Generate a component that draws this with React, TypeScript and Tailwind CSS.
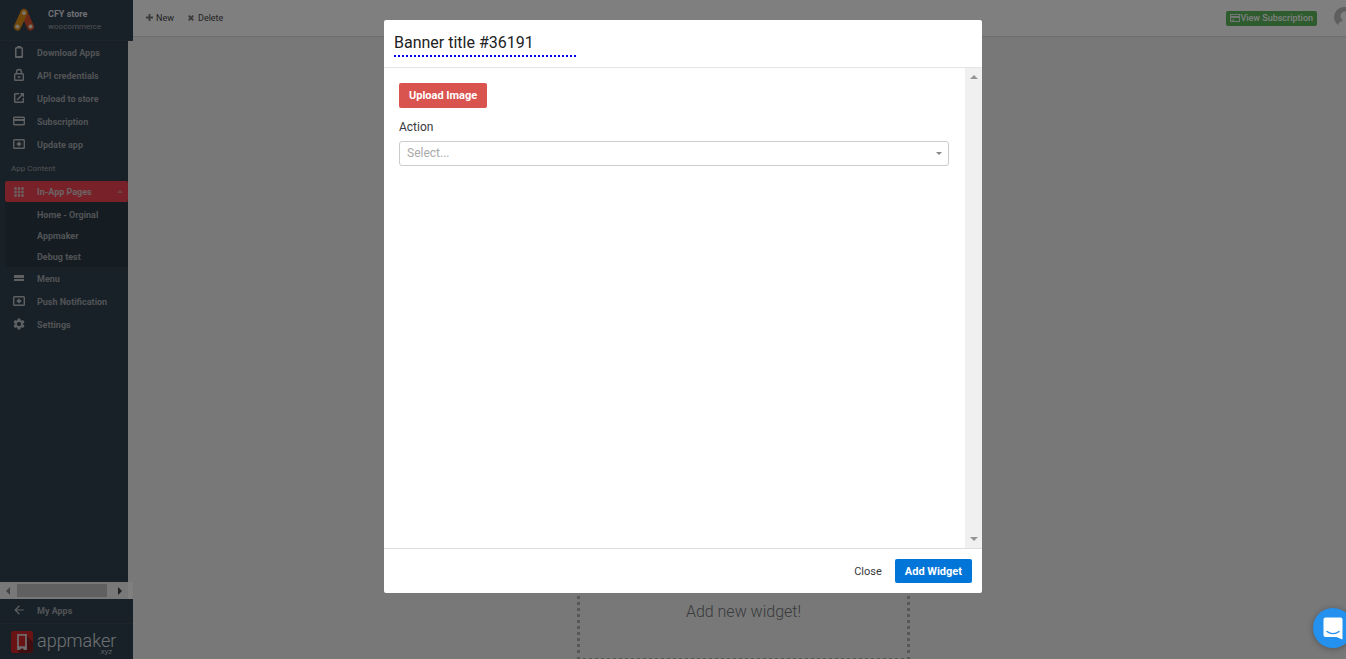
import React from "react";
import { MdApps, MdArrowBack, MdSettings } from "react-icons/md";

type IconProps = { children: React.ReactNode };

function Icon({ children }: IconProps) {
  return (
    <svg viewBox="0 0 14 14" className="mb-px size-[14px] shrink-0" fill="none" stroke="currentColor" aria-hidden="true">
      {children}
    </svg>
  );
}

const PhoneIcon = () => (
  <Icon>
    <rect x="3.75" y="2.75" width="6.5" height="9.5" rx="0.8" strokeWidth="1.6" />
    <path d="M5 1h4v2H5zM3 11h8v1.5H3z" fill="currentColor" stroke="none" />
  </Icon>
);
const LockIcon = () => (
  <Icon>
    <rect x="2.7" y="5.7" width="8.6" height="6.6" rx="0.8" strokeWidth="1.4" />
    <path d="M4.5 5.5V4a2.5 2.5 0 0 1 5 0v1.5" strokeWidth="1.4" />
    <path d="M5.5 9h3M7 8v2" strokeWidth="1.2" />
  </Icon>
);
const LaunchIcon = () => (
  <Icon>
    <path d="M7 2.700H3.200a.5.5 0 0 0-.5.5v7.600c0 .3.2.5.5.5h7.600c.3 0 .5-.2.5-.5V7" strokeWidth="1.500" />
    <path d="M5 9l5.500-5.500" strokeWidth="1.500" />
    <path d="M7.500 2H12v4.500z" fill="currentColor" stroke="none" />
  </Icon>
);
const CardIcon = () => (
  <Icon>
    <rect x="1.700" y="3.200" width="10.600" height="7.600" rx="0.800" strokeWidth="1.400" />
    <path d="M1.500 6h11" strokeWidth="2" />
  </Icon>
);
const BoxIcon = () => (
  <Icon>
    <rect x="1.700" y="2.700" width="10.600" height="8.600" rx="0.800" strokeWidth="1.400" />
    <path d="M7 4.500L9.700 7 7 9.500 4.300 7z" fill="currentColor" stroke="none" />
  </Icon>
);
const ListIcon = () => (
  <Icon>
    <path d="M2 4h2v3H2zM4 4h8v3H4zM2 8h2v2H2zM4 8h8v2H4z" fill="currentColor" stroke="none" />
  </Icon>
);

type NavItem = { label: string; icon: React.ReactNode };

const storeItems: NavItem[] = [
  { label: "Download Apps", icon: <PhoneIcon /> },
  { label: "API credentials", icon: <LockIcon /> },
  { label: "Upload to store", icon: <LaunchIcon /> },
  { label: "Subscription", icon: <CardIcon /> },
  { label: "Update app", icon: <BoxIcon /> },
];
const pages = ["Home - Orginal", "Appmaker", "Debug test"];
const contentItems: NavItem[] = [
  { label: "Menu", icon: <ListIcon /> },
  { label: "Push Notification", icon: <BoxIcon /> },
  { label: "Settings", icon: <MdSettings className="mb-px size-[14px]" /> },
];

function NavLink({ label, icon }: NavItem) {
  return (
    <a href="#" className="flex h-[23px] items-center gap-[11px] pl-3 text-[#bcc0c4]">
      {icon}
      <span className="pt-0.5 whitespace-nowrap text-[#a2a7ab]">{label}</span>
    </a>
  );
}

function StoreLogo() {
  return (
    <svg viewBox="0 0 22 24" className="h-6 w-[22px] shrink-0" strokeLinecap="round" aria-hidden="true">
      <path d="M11 4.500l6.600 14.500" stroke="#d6502c" strokeWidth="7" />
      <path d="M11 4.500L4.400 19" stroke="#e29118" strokeWidth="7" />
      <circle cx="11" cy="5" r="2" fill="#f4e8d2" />
      <circle cx="4.400" cy="18.500" r="2" fill="#f4e8d2" />
      <circle cx="17.600" cy="18.500" r="2" fill="#f4e8d2" />
    </svg>
  );
}

function Sidebar() {
  return (
    <aside className="flex w-[133px] shrink-0 flex-col text-[9px] font-bold">
      <div className="flex h-[41px] shrink-0 items-center gap-[13px] border-b border-[#3c4852] bg-[#314150] pl-[13px]">
        <StoreLogo />
        <div className="leading-3">
          <div className="text-[#dcdfe2]">CFY store</div>
          <div className="mt-px text-[8px] font-normal text-[#a0a5aa]">woocommerce</div>
        </div>
      </div>
      <nav className="mr-[5px] min-h-0 flex-1 overflow-hidden bg-[#314150]">
        {storeItems.map((item) => (
          <NavLink key={item.label} {...item} />
        ))}
        <h2 className="flex h-[25px] items-center pl-[11px] text-[8px] font-normal text-[#a0a5aa]">App Content</h2>
        <div className="ml-[5px] bg-[#2b3844]">
          <a href="#" className="flex h-[21px] items-center gap-[11px] rounded-xs bg-[#f14350] pl-[7px] pr-[5px] text-[#d9c6c9]">
            <MdApps className="size-[14px]" />
            <span className="flex-1 pt-0.5 whitespace-nowrap">In-App Pages</span>
            <svg viewBox="0 0 6 3" className="h-[3px] w-[6px]" aria-hidden="true">
              <path d="M0 3l3-3 3 3z" fill="#d88a90" />
            </svg>
          </a>
          <div className="pt-0.5">
            {pages.map((page) => (
              <a key={page} href="#" className="flex h-[21px] items-center pt-0.5 pl-8 text-[#a2a7ab]">
                {page}
              </a>
            ))}
          </div>
        </div>
        {contentItems.map((item) => (
          <NavLink key={item.label} {...item} />
        ))}
      </nav>
      <div className="flex h-[17px] shrink-0 bg-white" aria-hidden="true">
        <div className="flex flex-1 items-center bg-[#f1f1f1] px-[6px]">
          <svg viewBox="0 0 4 8" className="h-2 w-1">
            <path d="M4 0v8L0 4z" fill="#898989" />
          </svg>
          <div className="ml-[7px] h-[13px] w-[90px] bg-[#c1c1c1]" />
          <svg viewBox="0 0 4 8" className="ml-auto h-2 w-1">
            <path d="M0 0v8l4-4z" fill="#404040" />
          </svg>
        </div>
        <div className="w-[5px]" />
      </div>
      <a href="#" className="flex h-6 shrink-0 items-center gap-[11px] bg-[#314150] pl-3 text-[#bcc0c4]">
        <MdArrowBack className="mb-0.5 size-[14px]" />
        <span className="pt-px text-[#a2a7ab]">My Apps</span>
      </a>
      <div className="flex h-9 shrink-0 items-center gap-1 border-t border-[#3c4852] bg-[#314150] pl-[11px]">
        <svg viewBox="0 0 22 22" className="size-[22px] shrink-0" aria-hidden="true">
          <rect width="22" height="22" rx="2.500" fill="#d2262a" />
          <path d="M15 4l7 7v8.500a2.500 2.500 0 0 1-2.500 2.500H9L6 19z" fill="#811a20" />
          <path d="M7 3.800h8v12.500H7z" fill="#d2262a" stroke="#dfd4d6" strokeWidth="1.800" />
          <path d="M6.100 15.400h9.800V19h-3.400v-1.600h-3V19H6.100z" fill="#dfd4d6" />
        </svg>
        <div className="flex flex-col items-end pt-1 font-light text-[#dfe2e5]">
          <span className="text-[18px] leading-4">appmaker</span>
          <span className="pr-1 text-[8px] leading-[6px]">.xyz</span>
        </div>
      </div>
    </aside>
  );
}

function TopBar() {
  return (
    <header className="flex h-[37px] shrink-0 items-center border-b border-[#dcdcdc] bg-white pl-[13px] text-[9px] text-[#444]">
      <button type="button" className="flex items-center gap-[3px]">
        <svg viewBox="0 0 7 7" className="mb-px size-[7px]" aria-hidden="true">
          <path d="M3.500 0v7M0 3.500h7" stroke="#777" strokeWidth="1.800" />
        </svg>
        <span className="pt-0.5">New</span>
      </button>
      <button type="button" className="ml-[14px] flex items-center gap-1">
        <svg viewBox="0 0 7 7" className="size-[6px]" aria-hidden="true">
          <path d="M0.800 0.800l5.400 5.400M6.200 0.800L0.800 6.200" stroke="#777" strokeWidth="2.200" />
        </svg>
        <span className="pt-0.5">Delete</span>
      </button>
      <button type="button" className="ml-auto flex h-[15px] items-center rounded-xs bg-[#5cb85c] px-1 font-medium whitespace-nowrap text-white">
        <svg viewBox="0 0 10 8" className="h-2 w-[10px]" fill="none" stroke="#e6efe6" aria-hidden="true">
          <rect x="0.500" y="0.500" width="9" height="7" />
          <path d="M0 3h10" strokeWidth="2" />
          <path d="M1.500 6h3" />
        </svg>
        <span className="pt-0.5">View Subscription</span>
      </button>
      <div className="ml-[17px] w-3 overflow-hidden pb-0.5">
        <svg viewBox="0 0 20 20" className="block size-5 max-w-none" aria-label="Account" role="img">
          <circle cx="10" cy="10" r="10" fill="#bdbdbd" />
          <path d="M11 4.500a4.500 4.500 0 0 1 4.500 4.500c0 2-1 3-1.500 4.500L19 17a10 10 0 0 1-14 2c-1.500-2 0-4 3-5 1-.5.500-1-.200-2C6.500 11 6.500 10 6.500 9A4.500 4.500 0 0 1 11 4.500z" fill="#fff" />
        </svg>
      </div>
    </header>
  );
}

function BannerDialog() {
  return (
    <section role="dialog" aria-label="Banner" className="flex w-full max-w-[598px] flex-col rounded-xs bg-white">
      <header className="flex h-12 items-start border-b border-[#e5e5e5] px-[10px] pt-[11px]">
        <input
          aria-label="Banner title"
          defaultValue="Banner title #36191"
          className="h-[26px] w-[182px] border-b-2 border-dotted border-[#0000ee] pb-0.5 text-[16px] text-[#222] outline-none"
        />
      </header>
      <div className="flex h-[480px]">
        <div className="flex flex-1 flex-col items-start py-[15px] pl-[15px] pr-4">
          <button type="button" className="h-[25px] rounded-xs bg-[#d9534f] px-[10px] pt-px text-[11px] font-bold text-white">
            Upload Image
          </button>
          <label htmlFor="action" className="mt-[10px] text-[12px] leading-[18px] text-[#373a3c]">
            Action
          </label>
          <div className="relative mt-[5px] w-full">
            <select
              id="action"
              className="block h-[25px] w-full appearance-none rounded-[3px] border border-[#ccc] bg-white px-[7px] pb-0.5 text-[12px] text-[#aaa]"
            >
              <option>Select...</option>
            </select>
            <svg viewBox="0 0 6 3" className="pointer-events-none absolute right-[7px] top-[11px] h-[3px] w-[6px]" aria-hidden="true">
              <path d="M0 0h6L3 3z" fill="#888" />
            </svg>
          </div>
        </div>
        <div className="flex w-[17px] flex-col items-center justify-between bg-[#f0f0f0] py-[7px]" aria-hidden="true">
          <svg viewBox="0 0 8 4" className="h-1 w-2">
            <path d="M0 4l4-4 4 4z" fill="#969696" />
          </svg>
          <svg viewBox="0 0 8 4" className="h-1 w-2">
            <path d="M0 0h8L4 4z" fill="#969696" />
          </svg>
        </div>
      </div>
      <footer className="flex h-[45px] items-center justify-end gap-[13px] border-t border-[#ddd] px-[10px] text-[11px]">
        <button type="button" className="h-6 pt-0.5 text-[#373a3c]">
          Close
        </button>
        <button type="button" className="h-6 rounded-xs bg-[#0275d8] px-[10px] pt-0.5 font-bold text-white">
          Add Widget
        </button>
      </footer>
    </section>
  );
}

export default function App() {
  return (
    <div className="relative flex h-screen overflow-hidden bg-[#f0f0f0] font-[Roboto,sans-serif]">
      <Sidebar />
      <div className="flex min-w-0 flex-1 flex-col">
        <TopBar />
        <main className="flex min-h-0 flex-1 items-start justify-center overflow-hidden pl-2 pt-3">
          <div className="flex h-[612px] w-[333px] shrink-0 items-end justify-center border-[3px] border-dotted border-[#b0b0b0] pb-[34px]">
            <button type="button" className="text-[16px] leading-6 font-light text-[#72777b]">
              Add new widget!
            </button>
          </div>
        </main>
      </div>
      <div className="absolute inset-0 flex items-start justify-center bg-black/50 pl-5 pt-5">
        <BannerDialog />
      </div>
      <button
        type="button"
        aria-label="Open chat"
        className="absolute -right-[7px] bottom-[11px] flex size-10 items-center justify-center rounded-full bg-[#2391ed] shadow-[0_1px_6px_rgba(0,0,0,0.3)]"
      >
        <svg viewBox="0 0 20 23" className="h-[23px] w-5" aria-hidden="true">
          <path d="M2.500 0.500h15a2 2 0 0 1 2 2V22.500l-6-2.500h-11a2 2 0 0 1-2-2V2.500a2 2 0 0 1 2-2z" fill="#fff" />
          <path d="M4 14.500c3.500 2.800 8.500 2.800 12 0" fill="none" stroke="#2391ed" strokeWidth="1.400" strokeLinecap="round" />
        </svg>
      </button>
    </div>
  );
}
